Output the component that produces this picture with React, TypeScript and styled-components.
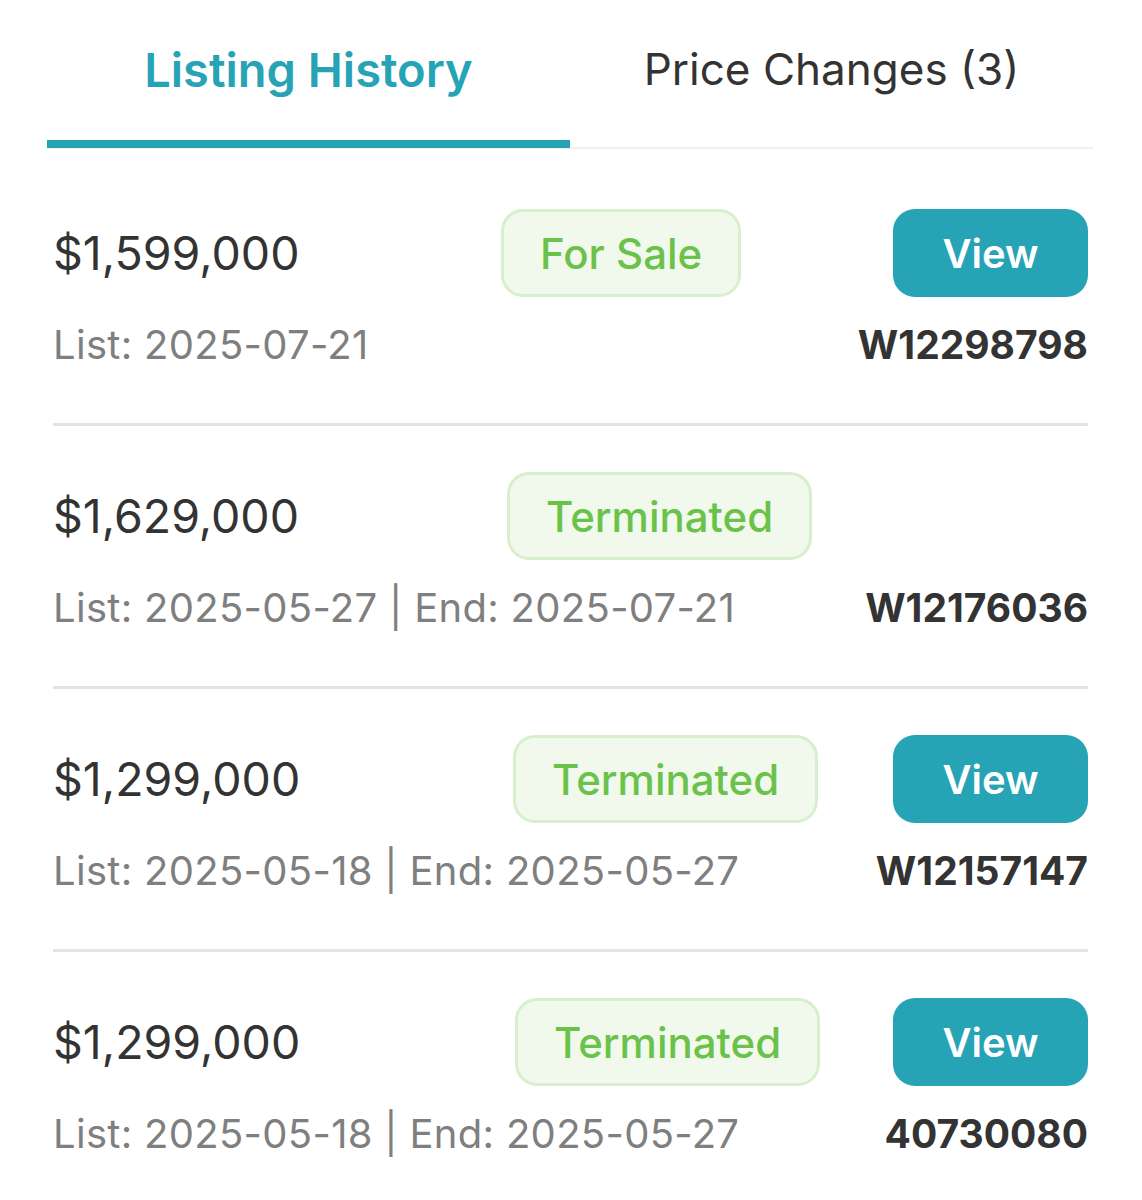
import React from "react";
import styled, { createGlobalStyle } from "styled-components";

const GlobalStyle = createGlobalStyle`
  html, body {
    margin: 0;
    padding: 0;
    background: #ffffff;
  }
  body {
    font-family: Inter, "Open Sans", "Liberation Sans", sans-serif;
    color: #333333;
  }
`;

const Page = styled.div`
  padding: 0 49px 0 47px;
`;

const TabBar = styled.div`
  display: flex;
  border-bottom: 2px solid #efefef;
`;

const Tab = styled.div<{ $active?: boolean }>`
  flex: 1;
  height: 138px;
  display: flex;
  align-items: center;
  justify-content: center;
  font-size: ${(p) => (p.$active ? 47 : 44)}px;
  font-weight: ${(p) => (p.$active ? 600 : 400)};
  color: ${(p) => (p.$active ? "#27a3b6" : "#333333")};
  border-bottom: 8px solid ${(p) => (p.$active ? "#27a3b6" : "transparent")};
  margin-bottom: -1px;
  padding-bottom: 2px;
  box-sizing: content-box;
`;

const List = styled.div`
  padding: 14px 5px 0 6px;
`;

const Row = styled.div`
  padding: 46px 0 49px;
  border-bottom: 3px solid #e3e3e3;
  &:last-child {
    border-bottom: none;
  }
`;

const TopLine = styled.div`
  display: flex;
  align-items: center;
  height: 88px;
`;

const PriceCell = styled.div<{ $width: number }>`
  flex: 0 0 ${(p) => p.$width}px;
  display: flex;
  align-items: center;
`;

const Price = styled.div`
  font-size: 46.5px;
  font-weight: 400;
  color: #333333;
`;

const Badge = styled.div`
  box-sizing: border-box;
  height: 88px;
  display: flex;
  align-items: center;
  padding: 0 36px;
  border: 3px solid #d7efcc;
  background: #f1f9ed;
  border-radius: 22px;
  color: #6bc24a;
  font-size: 42px;
  font-weight: 500;
`;

const ViewButton = styled.button`
  margin-left: auto;
  width: 195px;
  height: 88px;
  border: none;
  border-radius: 22px;
  background: #27a3b6;
  color: #ffffff;
  font-family: inherit;
  font-size: 40px;
  font-weight: 600;
  cursor: pointer;
`;

const BottomLine = styled.div`
  display: flex;
  align-items: center;
  justify-content: space-between;
  margin-top: 17px;
  height: 60px;
`;

const Dates = styled.div`
  font-size: 40px;
  letter-spacing: 0.3px;
  color: #7f7f7f;
`;

const ListingId = styled.div`
  font-size: 39px;
  font-weight: 700;
  color: #333333;
`;

type Listing = {
  price: string;
  status: string;
  dates: string;
  id: string;
  view: boolean;
  offset: number;
};

const listings: Listing[] = [
  { price: "$1,599,000", status: "For Sale", dates: "List: 2025-07-21", id: "W12298798", view: true, offset: 448 },
  { price: "$1,629,000", status: "Terminated", dates: "List: 2025-05-27 | End: 2025-07-21", id: "W12176036", view: false, offset: 454 },
  { price: "$1,299,000", status: "Terminated", dates: "List: 2025-05-18 | End: 2025-05-27", id: "W12157147", view: true, offset: 460 },
  { price: "$1,299,000", status: "Terminated", dates: "List: 2025-05-18 | End: 2025-05-27", id: "40730080", view: true, offset: 462 },
];

export default function App() {
  return (
    <>
      <GlobalStyle />
      <Page>
        <TabBar>
          <Tab $active>Listing History</Tab>
          <Tab>Price Changes (3)</Tab>
        </TabBar>
        <List>
          {listings.map((l, i) => (
            <Row key={i}>
              <TopLine>
                <PriceCell $width={l.offset}>
                  <Price>{l.price}</Price>
                </PriceCell>
                <Badge>{l.status}</Badge>
                {l.view && <ViewButton>View</ViewButton>}
              </TopLine>
              <BottomLine>
                <Dates>{l.dates}</Dates>
                <ListingId>{l.id}</ListingId>
              </BottomLine>
            </Row>
          ))}
        </List>
      </Page>
    </>
  );
}
